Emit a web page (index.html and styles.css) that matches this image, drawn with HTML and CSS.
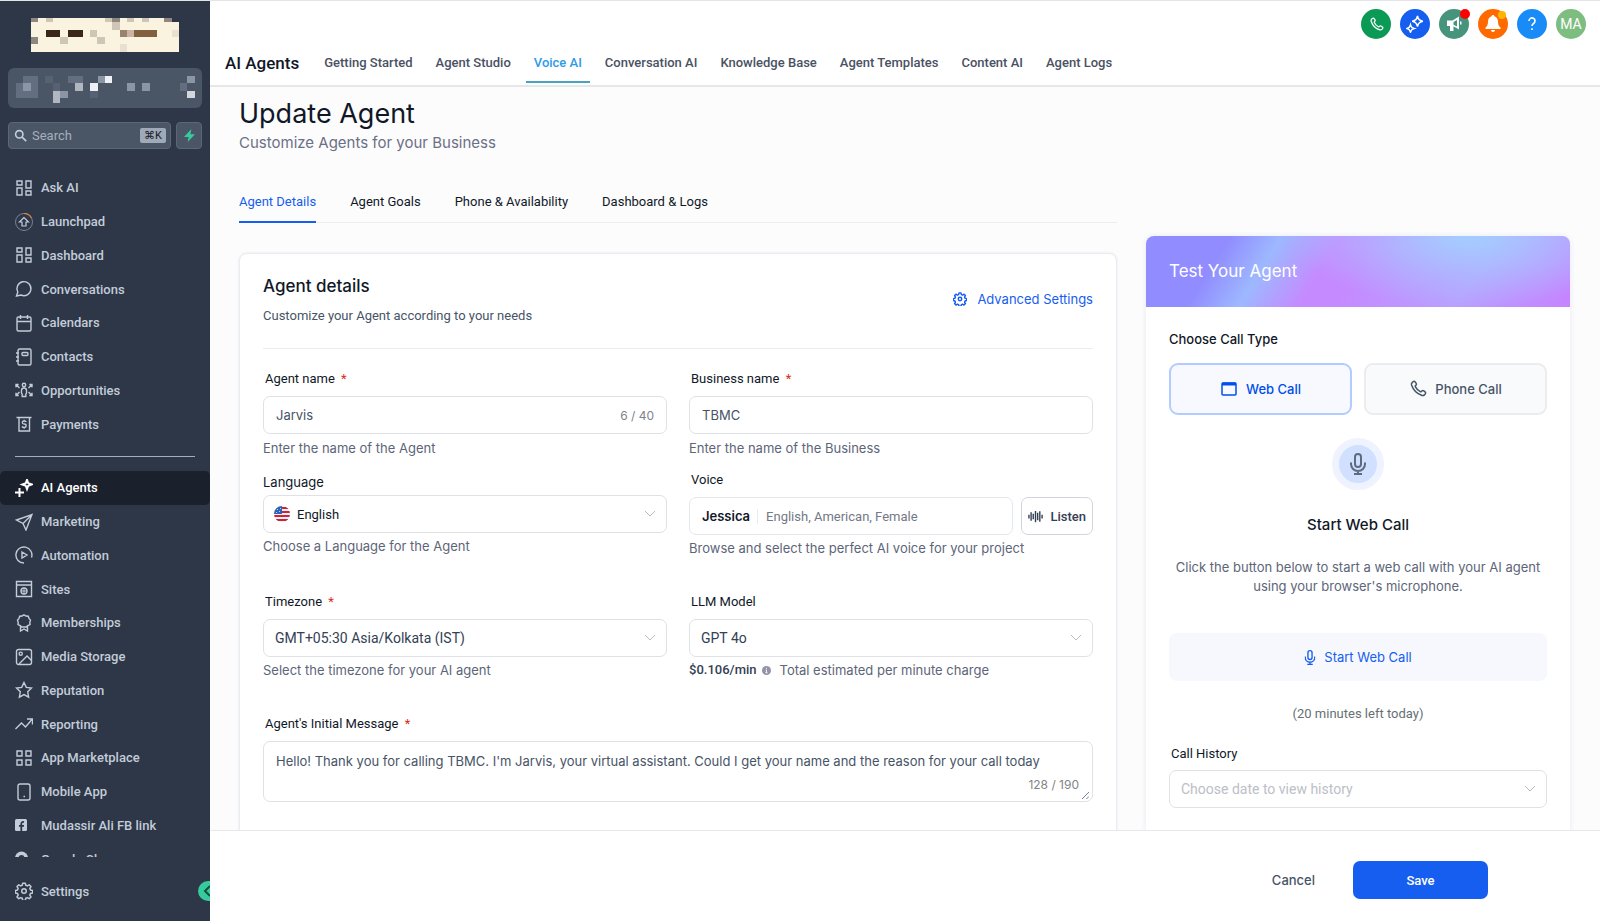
FILE: index.html
```html
<!DOCTYPE html>
<html lang="en">
<head>
  <meta charset="UTF-8">
  <meta name="viewport" content="width=device-width, initial-scale=1.0">
  <title>AI Agents - Update Agent</title>
  <link rel="stylesheet" href="styles.css">
</head>
<body>
  <div class="app">

    <aside class="sidebar">
      <svg class="logo" viewBox="90 55 450 103" shape-rendering="crispEdges" aria-hidden="true">
        <path fill="#faf3e0" d="M90 55h427v12h23v91H90z"/>
        <path fill="#8e8880" d="M90 55h22v12H90zM337 55h23v12h-23zM495 55h22v12h-22zM90 112h22v23H90z"/>
        <path fill="#cfc6b8" d="M135 55h22v12h-22zM315 55h22v12h-22zM382 55h22v12h-22zM427 55h22v12h-22zM337 67h23v23h-23zM270 90h22v22h-22zM180 112h22v23h-22zM292 112h23v23h-23z"/>
        <path fill="#3a2718" d="M135 90h45v22h-45zM203 90h44v22h-44z"/>
        <path fill="#9a8270" d="M360 90h22v22h-22z"/>
        <path fill="#cbb5a2" d="M382 90h22v22h-22z"/>
        <path fill="#80603f" d="M404 90h68v22h-68z"/>
        <path fill="#e8e1d1" d="M517 90h23v22h-23zM360 135h22v22h-22z"/>
      </svg>

      <button class="account" aria-label="Switch account">
        <svg viewBox="22 202 585 120" shape-rendering="crispEdges" aria-hidden="true">
          <path fill="#636f80" d="M67 225h45v67H45v-45h22zM202 225h45v22h-45zM540 247h22v23h-22z"/>
          <path fill="#566173" d="M135 225h22v22h-22zM157 247h23v23h-23zM270 270h22v22h-22z"/>
          <path fill="#8b95a3" d="M67 247h23v23H67zM180 270h22v22h-22zM292 225h23v22h-23zM382 247h22v23h-22zM427 247h22v23h-22zM562 225h23v22h-23z"/>
          <path fill="#b0b7c1" d="M157 270h23v37h-23zM225 247h22v23h-22z"/>
          <path fill="#d3d7dd" d="M562 270h23v22h-23z"/>
          <path fill="#eef1f5" d="M270 247h22v23h-22zM315 225h22v22h-22z"/>
        </svg>
      </button>

      <div class="search-row">
        <label class="search">
          <svg class="search-icon" viewBox="0 0 16 16" stroke-width="2"><circle cx="6.500" cy="6.500" r="4.500"/><path d="M10 10l5 5"/></svg>
          <input type="text" placeholder="Search" aria-label="Search">
          <kbd>⌘K</kbd>
        </label>
        <button class="bolt" aria-label="Quick actions">
          <svg viewBox="0 0 12 14"><path d="M8 0L0 8.500h5L4 14l8-8.500H7z"/></svg>
        </button>
      </div>

      <nav class="menu">
        <div class="menu-group first">
          <a href="#"><svg viewBox="0 0 18 18"><path d="M2 2h5v4H2zM11 2h5v7h-5zM2 9h5v7H2zM11 12h5v4h-5z"/></svg>Ask AI</a>
          <a href="#"><svg viewBox="0 0 18 18"><circle cx="9" cy="9" r="8.500" stroke-width="1" opacity=".5"/><path d="M9 .5a8.500 8.500 0 0 1 7.500 4.500" stroke="#d9843b" stroke-width="1.200"/><path d="M9 4.500L4.500 9H7v4h4V9h2.500z" stroke-width="1.200"/></svg>Launchpad</a>
          <a href="#"><svg viewBox="0 0 18 18"><path d="M2 2h5v4H2zM11 2h5v7h-5zM2 9h5v7H2zM11 12h5v4h-5z"/></svg>Dashboard</a>
          <a href="#"><svg viewBox="0 0 18 18"><path d="M1.500 16l1.300-4A7 7 0 1 1 6 15z"/></svg>Conversations</a>
          <a href="#"><svg viewBox="0 0 18 18"><rect x="2" y="3" width="14" height="14" rx="1.500"/><path d="M2 7.500h14M5.500 1v4M12.500 1v4"/></svg>Calendars</a>
          <a href="#"><svg viewBox="0 0 18 18"><rect x="3" y="1" width="13" height="16" rx="1.500"/><rect x="7" y="4.500" width="6" height="3" rx="1"/><path d="M1 5h3M1 9h3M1 13h3"/></svg>Contacts</a>
          <a href="#"><svg viewBox="0 0 18 18"><circle cx="9" cy="4" r="1.700"/><path d="M7.200 15.500v-2.300L6.500 12V9.500a2.500 2.500 0 0 1 5 0V12l-.7 1.200v2.300z"/><path d="M4.500 7L1 3.500M1 6.200V3.500h2.700M13.500 7L17 3.500M17 6.200V3.500h-2.700M4.500 11L1 14.500M1 11.800v2.700h2.700M13.500 11l3.500 3.500M17 11.800v2.700h-2.700"/></svg>Opportunities</a>
          <a href="#"><svg viewBox="0 0 18 18"><path d="M1.500 2.500h15M4 2.500v13.500h10.500V2.500"/><path d="M11.300 6.800c-.5-.7-1.200-.8-2.100-.8-2.600 0-2.600 3 0 3s2.600 3.500 0 3.500c-1 0-1.800-.3-2.300-1M9.200 4.800V6M9.200 12.500v1.200" stroke-width="1.300"/></svg>Payments</a>
        </div>
        <hr>
        <div class="menu-group second">
          <a href="#" class="active"><svg viewBox="0 0 18 18"><path d="M12 .8l1.200 3.300 3.500 1.300-3.500 1.300L12 10l-1.200-3.300-3.500-1.300 3.500-1.300zM4.500 9v9M0 13.500h9"/></svg>AI Agents</a>
          <a href="#"><svg viewBox="0 0 18 18"><path d="M1.500 7L17 1.500 11 17 8 10.500zM8 10.500L17 1.500"/></svg>Marketing</a>
          <a href="#"><svg viewBox="0 0 18 18"><path d="M16.500 11.500A8 8 0 1 0 9 17M7 6l5 3-5 3z"/></svg>Automation</a>
          <a href="#"><svg viewBox="0 0 18 18"><path d="M1.500 1.500h15v15h-15zM1.500 5h15"/><circle cx="9" cy="11" r="3"/><path d="M6 11h6M9 8v6" stroke-width="1"/></svg>Sites</a>
          <a href="#"><svg viewBox="0 0 18 18"><path d="M9 .8l2 1.200 2.300.2.700 2.200 1.500 1.700-.7 2.200.2 2.300-2.200.9L11 13H7l-1.800-1.500-2.200-.9.200-2.300-.7-2.200L4 4.400l.7-2.200L7 2zM5.500 11.500V17L9 15l3.500 2v-5.500"/></svg>Memberships</a>
          <a href="#"><svg viewBox="0 0 18 18"><rect x="1.500" y="1.500" width="15" height="15" rx="2"/><circle cx="5.700" cy="5.700" r="1.600"/><path d="M4 16l8-8 4.500 4.500"/></svg>Media Storage</a>
          <a href="#"><svg viewBox="0 0 18 18"><path d="M9 1.500l2.300 4.900 5.200.7-3.800 3.700.9 5.400L9 13.600l-4.600 2.600.9-5.400L1.500 7.100l5.200-.7z"/></svg>Reputation</a>
          <a href="#"><svg viewBox="0 0 18 18"><path d="M.5 14l6-6 4 4L17 4.500M12 4h5.500v5.500"/></svg>Reporting</a>
          <a href="#"><svg viewBox="0 0 18 18"><path d="M2 2h5v5H2zM11 2h5v5h-5zM2 11h5v5H2zM11 11h5v5h-5z"/></svg>App Marketplace</a>
          <a href="#"><svg viewBox="0 0 18 18"><rect x="3" y="1" width="12" height="16" rx="2"/><path d="M8.500 13.500h1.500"/></svg>Mobile App</a>
          <a href="#"><svg class="solid" viewBox="0 0 18 18"><rect y="3" width="12" height="12" rx="1.500"/><path d="M6.300 15v-7c0-1.500.6-2.300 2.700-2.100M4 9.800h5" fill="none" stroke="#2d3748" stroke-width="1.800"/></svg>Mudassir Ali FB link</a>
          <a href="#"><svg class="solid" viewBox="0 0 18 18"><circle cx="6.500" cy="8" r="6.500"/><circle cx="6.500" cy="8" r="3" fill="#2d3748"/></svg>Google Chrome</a>
        </div>
      </nav>

      <div class="settings">
        <a href="#"><svg viewBox="0 0 24 24"><use href="#gear"/></svg>Settings</a>
        <button class="collapse" aria-label="Collapse sidebar"><svg viewBox="0 0 12 12"><path d="M9 1L4 6l5 5"/></svg></button>
      </div>
    </aside>

    <div class="main">
      <header class="topbar">
        <div class="actions">
          <button class="circle green" aria-label="Call"><svg viewBox="0 0 24 24"><use href="#phone"/></svg></button>
          <button class="circle blue" aria-label="Ask AI"><svg viewBox="0 0 18 18"><path d="M11.500 1c.9 3.500 1.800 4.400 5.300 5.300-3.500.9-4.400 1.800-5.300 5.300-.9-3.500-1.800-4.400-5.300-5.300 3.500-.9 4.400-1.800 5.300-5.300zM4.500 10c.6 2.300 1.200 2.900 3.500 3.500-2.300.6-2.900 1.200-3.500 3.500-.6-2.300-1.200-2.900-3.500-3.500 2.300-.6 2.900-1.200 3.500-3.500z"/></svg></button>
          <button class="circle teal" aria-label="Announcements"><svg class="solid" viewBox="0 0 18 18"><path d="M2 5.500h5.500L14 1.500v13l-5.500-3.300V16H5v-5H2z"/><path d="M8.500 7l3.500-2v6.500L8.500 9.700z" fill="#45947b"/><path d="M15 6.500h1.500v3H15z"/></svg><span class="dot red"></span></button>
          <button class="circle orange" aria-label="Notifications"><svg class="solid" viewBox="0 0 18 18"><path d="M9 0c-.8 0-1.300.5-1.300 1.300C5.200 2 4 4 4 6.500c0 3.200-.8 4.500-2.500 6V14h15v-1.500c-1.700-1.500-2.500-2.800-2.500-6C14 4 12.800 2 10.300 1.300 10.300.5 9.800 0 9 0zM7 15h4c0 2.600-4 2.600-4 0z"/></svg><span class="dot yellow"></span></button>
          <button class="circle sky" aria-label="Help"><svg viewBox="0 0 18 18"><path d="M6 6a3 3 0 1 1 4.600 2.500C9.500 9.200 9 9.700 9 11M9 13.300v1.700" stroke-width="1.600"/></svg></button>
          <button class="circle avatar">MA</button>
        </div>
        <nav class="tabs">
          <h2>AI Agents</h2>
          <a href="#">Getting Started</a>
          <a href="#">Agent Studio</a>
          <a href="#" class="active">Voice AI</a>
          <a href="#">Conversation AI</a>
          <a href="#">Knowledge Base</a>
          <a href="#">Agent Templates</a>
          <a href="#">Content AI</a>
          <a href="#">Agent Logs</a>
        </nav>
      </header>

      <main class="content">
        <section class="left">
          <h1>Update Agent</h1>
          <p class="subtitle">Customize Agents for your Business</p>

          <nav class="subtabs">
            <a href="#" class="active">Agent Details</a>
            <a href="#">Agent Goals</a>
            <a href="#">Phone &amp; Availability</a>
            <a href="#">Dashboard &amp; Logs</a>
          </nav>

          <form class="card">
            <div class="card-head">
              <div>
                <h3>Agent details</h3>
                <p>Customize your Agent according to your needs</p>
              </div>
              <button type="button" class="advanced"><svg viewBox="0 0 24 24"><use href="#gear"/></svg>Advanced Settings</button>
            </div>

            <div class="fields">
              <div class="field">
                <label for="agent-name">Agent name <span class="req">*</span></label>
                <div class="box">
                  <input id="agent-name" type="text" value="Jarvis">
                  <span class="count">6 / 40</span>
                </div>
                <p class="help">Enter the name of the Agent</p>
              </div>
              <div class="field">
                <label for="business-name">Business name <span class="req">*</span></label>
                <div class="box">
                  <input id="business-name" type="text" value="TBMC">
                </div>
                <p class="help">Enter the name of the Business</p>
              </div>

              <div class="field language">
                <label for="language">Language</label>
                <div class="select-wrap">
                  <svg class="flag" viewBox="0 0 16 16">
                    <clipPath id="round"><circle cx="8" cy="8" r="8"/></clipPath>
                    <g clip-path="url(#round)">
                      <path fill="#f4f4f6" d="M0 0h16v16H0z"/>
                      <path fill="#d0203a" d="M7 1h9v2H7zM7 5h9v2H7zM0 9h16v2H0zM0 13h16v2H0z"/>
                      <path fill="#2f62b5" d="M0 0h8v8H0z"/>
                      <path fill="#c8d8f2" d="M3 3h1v1H3zM6 2h1v1H6zM5 5h1v1H5zM2 6h1v1H2z"/>
                    </g>
                  </svg>
                  <select id="language"><option>English</option></select>
                  <svg class="chevron" viewBox="0 0 12 8"><path d="M1 1l5 5 5-5"/></svg>
                </div>
                <p class="help">Choose a Language for the Agent</p>
              </div>
              <div class="field voice">
                <label for="voice">Voice</label>
                <div class="voice-row">
                  <button type="button" class="voice-box" id="voice"><strong>Jessica</strong><span>English, American, Female</span></button>
                  <button type="button" class="listen"><svg viewBox="0 0 16 16"><path d="M1 6v4M3.300 3.500v9M5.600 5v6M8 2v12M10.300 4v8M12.600 2.500v11M15 6v4"/></svg>Listen</button>
                </div>
                <p class="help">Browse and select the perfect AI voice for your project</p>
              </div>

              <div class="field">
                <label for="timezone">Timezone <span class="req">*</span></label>
                <div class="select-wrap">
                  <select id="timezone"><option>GMT+05:30 Asia/Kolkata (IST)</option></select>
                  <svg class="chevron" viewBox="0 0 12 8"><path d="M1 1l5 5 5-5"/></svg>
                </div>
                <p class="help">Select the timezone for your AI agent</p>
              </div>
              <div class="field">
                <label for="model">LLM Model</label>
                <div class="select-wrap">
                  <select id="model"><option>GPT 4o</option></select>
                  <svg class="chevron" viewBox="0 0 12 8"><path d="M1 1l5 5 5-5"/></svg>
                </div>
                <p class="help price"><strong>$0.106/min</strong><svg class="solid" viewBox="0 0 10 10"><circle cx="5" cy="5" r="5"/><path d="M5 2v1.200M4 4.500h1v3M3.800 7.500h2.400" fill="none" stroke="#fff"/></svg>Total estimated per minute charge</p>
              </div>

              <div class="field wide">
                <label for="message">Agent's Initial Message <span class="req">*</span></label>
                <div class="box message">
                  <textarea id="message" rows="1" wrap="off">Hello! Thank you for calling TBMC. I'm Jarvis, your virtual assistant. Could I get your name and the reason for your call today</textarea>
                  <span class="count">128 / 190</span>
                  <svg class="grip" viewBox="0 0 8 8"><path d="M0 8l8-8M5 8l3-3"/></svg>
                </div>
              </div>
            </div>
          </form>
        </section>

        <aside class="test">
          <h3 class="test-head">Test Your Agent</h3>
          <div class="test-body">
            <h4>Choose Call Type</h4>
            <div class="call-types">
              <button class="call-type selected"><svg viewBox="0 0 16 14"><rect x="1" y="1" width="14" height="12" rx="1"/><path d="M1 2h14" stroke-width="3"/></svg>Web Call</button>
              <button class="call-type"><svg viewBox="0 0 24 24"><use href="#phone"/></svg>Phone Call</button>
            </div>
            <div class="mic"><svg viewBox="0 0 16 22"><use href="#mic"/></svg></div>
            <h5>Start Web Call</h5>
            <p class="info">Click the button below to start a web call with your AI agent using your browser's microphone.</p>
            <button class="start"><svg viewBox="0 0 16 22"><use href="#mic"/></svg>Start Web Call</button>
            <p class="left-today">(20 minutes left today)</p>
            <label for="history">Call History</label>
            <div class="select-wrap history">
              <select id="history"><option>Choose date to view history</option></select>
              <svg class="chevron" viewBox="0 0 12 8"><path d="M1 1l5 5 5-5"/></svg>
            </div>
          </div>
        </aside>
      </main>

      <footer class="footer">
        <button class="cancel">Cancel</button>
        <button class="save">Save</button>
      </footer>
    </div>
  </div>

  <!-- shared icons -->
  <svg class="defs" aria-hidden="true">
    <symbol id="gear" viewBox="0 0 24 24">
      <circle cx="12" cy="12" r="3"/>
      <path d="M10.300 1.500h3.400l.7 2.900 2 .8 2.500-1.500 2.400 2.400-1.500 2.500.8 2 2.900.7v3.400l-2.900.7-.8 2 1.500 2.500-2.400 2.400-2.500-1.500-2 .8-.7 2.900h-3.400l-.7-2.900-2-.8-2.500 1.500-2.400-2.400 1.500-2.500-.8-2-2.900-.7v-3.400l2.900-.7.8-2-1.500-2.500 2.400-2.400 2.500 1.500 2-.8z" stroke-linejoin="round"/>
    </symbol>
    <symbol id="phone" viewBox="0 0 24 24">
      <path d="M8.400 8.900a14.500 14.500 0 0 0 6.700 6.700c.5.200 1 .1 1.400-.3l.6-.6c.8-.8 1.800-.8 2.700-.1l1.600 1.200c1 .8 1 2 .2 2.900l-1.100 1.100c-.8.8-1.900 1.200-3.200.8A22 22 0 0 1 3.400 6.700C3 5.400 3.400 4.300 4.200 3.500l1.100-1.100c.9-.8 2.100-.8 2.900.2l1.200 1.600c.7.900.7 1.900-.1 2.700l-.6.6c-.4.4-.5.900-.3 1.400z"/>
    </symbol>
    <symbol id="mic" viewBox="0 0 16 22">
      <rect x="5" y="1" width="6" height="13" rx="3"/>
      <path d="M1 9.500v1.500a7 7 0 0 0 14 0V9.500M8 18v3M4 21h8"/>
    </symbol>
  </svg>
</body>
</html>
```
FILE: styles.css
```css
* {
  margin: 0;
  padding: 0;
  box-sizing: border-box;
}

body {
  font-family: Inter, sans-serif;
  font-size: 13px;
  color: #101828;
}

button,
input,
select,
textarea {
  font: inherit;
  color: inherit;
  border: none;
  background: none;
  outline: none;
}

button,
select {
  cursor: pointer;
}

a {
  text-decoration: none;
  color: inherit;
}

svg {
  fill: none;
  stroke: currentColor;
  flex-shrink: 0;
}

svg.solid {
  fill: currentColor;
  stroke: none;
}

.defs {
  display: none;
}

.app {
  display: flex;
  height: 100vh;
  border-top: 1px solid #e2e4e8;
}

/* Sidebar */
.sidebar {
  width: 210px;
  flex-shrink: 0;
  display: flex;
  flex-direction: column;
  background: #2d3748;
  color: #c3ccd8;
  font-family: Roboto, sans-serif;
  overflow: hidden;
}

.logo {
  width: 150px;
  height: 34px;
  margin: 17px 0 16px 30px;
  stroke: none;
}

.account {
  height: 40px;
  margin: 0 8px 14px;
  border-radius: 6px;
  background: #4a5566;
  overflow: hidden;
}

.account svg {
  display: block;
  width: 100%;
  height: 40px;
  stroke: none;
}

.search-row {
  display: flex;
  gap: 5px;
  margin: 0 8px;
}

.search,
.bolt {
  height: 27px;
  border: 1px solid #5b6778;
  border-radius: 4px;
  background: #4a5566;
}

.search {
  flex: 1;
  min-width: 0;
  display: flex;
  align-items: center;
  gap: 5px;
  padding: 0 4px 0 5px;
}

.search-icon {
  width: 13px;
  height: 13px;
}

.search input {
  flex: 1;
  width: 0;
  min-width: 0;
}

.search input::placeholder {
  color: #a6afbc;
}

kbd {
  padding: 0 4px;
  border-radius: 2px;
  background: #a0a9b8;
  color: #1a202c;
  font: 11px/15px Roboto, "DejaVu Sans", sans-serif;
}

.bolt {
  flex-shrink: 0;
  display: flex;
  align-items: center;
  justify-content: center;
  width: 26px;
}

.bolt svg {
  width: 11px;
  height: 13px;
  fill: #37ca9e;
  stroke: none;
}

.menu {
  flex: 1;
  min-height: 0;
  margin-top: 22px;
  overflow: hidden;
}

.menu-group {
  display: grid;
  grid-auto-rows: 1fr;
}

.menu-group.first {
  min-height: 270px;
}

.menu-group.second {
  min-height: 405px;
}

.menu a,
.settings a {
  display: flex;
  align-items: center;
  gap: 8px;
  padding: 0 15px;
  font-weight: 500;
}

.menu svg,
.settings a svg {
  width: 18px;
  height: 18px;
  stroke-width: 1.400;
}

.menu a.active {
  background: #1a202c;
  border-radius: 5px;
  color: #fff;
}

.menu a.active svg {
  stroke-width: 2;
}

.menu hr {
  margin: 15px 15px 14px;
  border: none;
  border-top: 1px solid #a0aec0;
}

.settings {
  display: flex;
  align-items: center;
  justify-content: space-between;
  height: 64px;
  padding-top: 4px;
}

.settings a svg {
  stroke-width: 2;
}

.collapse {
  width: 12px;
  height: 20px;
  border-radius: 10px 0 0 10px;
  background: #37ca9e;
  color: #14523f;
  overflow: hidden;
}

.collapse svg {
  display: block;
  width: 12px;
  height: 12px;
  margin-left: 3px;
  stroke-width: 2;
}

/* Header */
.main {
  flex: 1;
  min-width: 0;
  display: flex;
  flex-direction: column;
}

.topbar {
  border-bottom: 2px solid #e6e7e9;
  background: #fff;
  font-family: Roboto, sans-serif;
}

.actions {
  display: flex;
  justify-content: flex-end;
  gap: 9px;
  padding: 8px 14px 0;
}

.circle {
  position: relative;
  display: flex;
  align-items: center;
  justify-content: center;
  width: 30px;
  height: 30px;
  border-radius: 50%;
  color: #fff;
}

.circle svg {
  width: 18px;
  height: 18px;
  stroke-width: 1.500;
}

.circle.green svg {
  width: 15px;
  height: 15px;
  stroke-width: 2;
}

.green { background: #0a9a55; }
.blue { background: #155eef; }
.teal { background: #45947b; }
.orange { background: #ff6a00; }
.sky { background: #188bf6; }

.avatar {
  background: #7dbd80;
  font-size: 14px;
}

.dot {
  position: absolute;
  top: 0;
  right: -1px;
  width: 10px;
  height: 10px;
  border-radius: 50%;
}

.dot.red { background: #f00; }
.dot.yellow { background: #ffb400; width: 8px; height: 8px; top: 2px; right: 2px; }

.tabs {
  display: flex;
  align-items: flex-end;
  gap: 7px;
  padding: 2px 15px;
}

.tabs h2 {
  margin-right: 10px;
  font-size: 17px;
  font-weight: 500;
  line-height: 44px;
  margin-bottom: -2px;
}

.tabs a {
  padding: 0 8px;
  line-height: 37px;
  font-weight: 500;
  color: #4a5163;
  border-bottom: 2px solid transparent;
}

.tabs a.active {
  color: #2e9be6;
  border-color: #4aa3bf;
}

/* Content */
.content {
  flex: 1;
  min-height: 0;
  display: grid;
  grid-template-columns: minmax(0, 1fr) 424px;
  gap: 29px;
  padding: 0 30px 0 29px;
  background: #fcfcfd;
  overflow: hidden;
}

h1 {
  margin-top: 8px;
  font-size: 27px;
  font-weight: 400;
  line-height: 38px;
}

.subtitle {
  font-size: 15px;
  line-height: 20px;
  color: #6b7085;
}

.subtabs {
  display: flex;
  gap: 34px;
  margin-top: 30px;
  border-bottom: 1px solid #eceef1;
  font-family: Roboto, sans-serif;
}

.subtabs a {
  margin-bottom: -1px;
  line-height: 38px;
  border-bottom: 2px solid transparent;
}

.subtabs a.active {
  color: #155eef;
  border-color: #155eef;
}

.card {
  margin-top: 30px;
  min-height: 620px;
  padding: 20px 23px;
  border: 1px solid #eaecf0;
  border-radius: 8px;
  background: #fff;
  box-shadow: 0 0 3px #e6e8ec;
}

.card-head {
  display: flex;
  justify-content: space-between;
  align-items: flex-start;
  padding-bottom: 21px;
  border-bottom: 1px solid #eaecf0;
}

.card-head h3 {
  font-size: 17px;
  font-weight: 500;
  line-height: 24px;
}

.card-head p {
  margin-top: 7px;
  font-family: Roboto, sans-serif;
  line-height: 22px;
  color: #475467;
}

.advanced {
  display: flex;
  align-items: center;
  gap: 10px;
  margin-top: 15px;
  line-height: 20px;
  color: #155eef;
}

.advanced svg {
  width: 14px;
  height: 14px;
  stroke-width: 2.500;
}

.fields {
  display: grid;
  grid-template-columns: 1fr 1fr;
  column-gap: 22px;
  margin-top: 20px;
}

.field {
  display: flex;
  flex-direction: column;
  min-height: 101px;
}

.field.wide {
  grid-column: 1 / -1;
}

.field.language,
.field.voice,
.field:nth-child(n + 5) {
  min-height: 122px;
}

.field label,
.test-body label {
  padding-left: 2px;
  margin-bottom: 7px;
  font-family: Roboto, sans-serif;
  line-height: 20px;
}

.field.language label {
  padding: 2px 0 0;
  margin-bottom: 3px;
  font-family: Inter, sans-serif;
}

.req {
  margin-left: 3px;
  color: #d92d20;
}

.box,
.select-wrap {
  position: relative;
  display: flex;
  align-items: center;
  height: 38px;
  border: 1px solid #dfe1e6;
  border-radius: 7px;
  background: #fff;
}

.box {
  padding: 0 12px;
}

.box input {
  flex: 1;
  min-width: 0;
  color: #475467;
}

.count {
  font-size: 12px;
  color: #808489;
}

.help {
  margin-top: 4px;
  line-height: 20px;
  color: #5d6579;
}

.select-wrap + .help,
.voice-row + .help {
  margin-top: 3px;
}

.select-wrap select {
  appearance: none;
  width: 100%;
  height: 36px;
  padding: 0 30px 0 11px;
  font-family: Roboto, sans-serif;
  font-size: 14px;
  color: #344054;
}

.language .select-wrap select {
  padding-left: 33px;
  font-size: 13px;
  color: #101828;
}

.chevron {
  position: absolute;
  right: 10px;
  width: 12px;
  height: 8px;
  color: #b7bcc5;
  pointer-events: none;
}

.flag {
  position: absolute;
  left: 10px;
  width: 16px;
  height: 16px;
  stroke: none;
}

.voice-row {
  display: flex;
  gap: 8px;
}

.voice-box,
.listen {
  display: flex;
  align-items: center;
  height: 38px;
  border: 1px solid #e4e7ec;
  border-radius: 7px;
  background: #fff;
}

.voice-box {
  flex: 1;
  padding: 0 12px;
}

.voice-box strong {
  font-weight: 600;
}

.voice-box span {
  margin-left: 7px;
  padding-left: 8px;
  border-left: 1px solid #eaecf0;
  font-family: Roboto, sans-serif;
  color: #737988;
}

.listen {
  gap: 7px;
  padding: 0 6px;
  border-color: #d0d5dd;
  font-family: Roboto, sans-serif;
  font-weight: 500;
  color: #344054;
}

.listen svg {
  width: 15px;
  height: 15px;
  stroke-width: 1.500;
}

.price {
  display: flex;
  align-items: center;
}

.price strong {
  font-family: Roboto, sans-serif;
  font-weight: 500;
  color: #344054;
}

.price svg {
  width: 9px;
  height: 9px;
  margin: 0 9px 0 5px;
  color: #9293ab;
}

.box.message {
  height: 61px;
  padding: 9px 27px 0 12px;
  align-items: flex-start;
}

.message textarea {
  width: 100%;
  height: 22px;
  line-height: 20px;
  resize: none;
  overflow: hidden;
  color: #475467;
}

.message .count {
  position: absolute;
  right: 13px;
  bottom: 9px;
}

.grip {
  position: absolute;
  right: 3px;
  bottom: 2px;
  width: 7px;
  height: 7px;
  color: #667085;
}

/* Test panel */
.test {
  margin-top: 149px;
  min-height: 640px;
  border-radius: 8px;
  background: #fff;
  box-shadow: 0 0 6px #e8eaee;
  overflow: hidden;
}

.test-head {
  padding: 0 23px;
  font-size: 17px;
  font-weight: 400;
  line-height: 71px;
  color: #fff;
  background:
    radial-gradient(ellipse 42% 100% at 76% 0, #a4ceff, transparent),
    linear-gradient(122deg, #918cff 18%, #9db8ff 29%, #c58aff 42%, #c58aff 50%, #b8a0ff 75%, #c585ff 98%);
}

.test-body {
  display: flex;
  flex-direction: column;
  padding: 22px 23px;
}

.test-body h4 {
  font-size: 13px;
  font-weight: 500;
  line-height: 20px;
}

.call-types {
  display: grid;
  grid-template-columns: 1fr 1fr;
  gap: 12px;
  margin-top: 14px;
}

.call-type,
.start {
  display: flex;
  align-items: center;
  justify-content: center;
  gap: 8px;
}

.call-type {
  height: 52px;
  border: 2px solid #eaecf0;
  border-radius: 9px;
  background: #f9fafb;
  color: #475467;
  font-weight: 500;
}

.call-type svg {
  width: 18px;
  height: 18px;
  stroke-width: 2;
}

.call-type.selected {
  border-color: #b2ccff;
  background: #f7f9ff;
  color: #004eeb;
}

.call-type.selected svg {
  height: 14px;
  stroke-width: 1.500;
}

.mic {
  align-self: center;
  display: flex;
  align-items: center;
  justify-content: center;
  width: 52px;
  height: 52px;
  margin-top: 23px;
  border: 7px solid #eff3ff;
  border-radius: 50%;
  background: #d1e0ff;
  color: #5d6b80;
}

.mic svg {
  width: 16px;
  height: 22px;
  stroke-width: 2;
}

h5 {
  margin-top: 23px;
  font-size: 15px;
  font-weight: 500;
  line-height: 24px;
  text-align: center;
}

.info {
  margin-top: 21px;
  line-height: 19px;
  text-align: center;
  color: #5d6579;
}

.start {
  height: 48px;
  margin-top: 37px;
  border-radius: 8px;
  background: #f6f8fd;
  color: #155eef;
}

.start svg {
  width: 12px;
  height: 15px;
  stroke-width: 2;
}

.left-today {
  margin-top: 23px;
  font-family: Roboto, sans-serif;
  line-height: 20px;
  text-align: center;
  color: #667074;
}

.test-body label {
  margin-top: 20px;
  margin-bottom: 6px;
}

.select-wrap.history select {
  color: #bcc0c6;
}

/* Footer */
.footer {
  display: flex;
  align-items: center;
  justify-content: flex-end;
  gap: 38px;
  height: 91px;
  padding: 8px 112px 0 0;
  border-top: 1px solid #e6e8ec;
  background: #fff;
}

.cancel {
  font-weight: 500;
  color: #475467;
}

.save {
  width: 135px;
  height: 38px;
  border-radius: 7px;
  background: #155eef;
  color: #fff;
  font-family: Roboto, sans-serif;
  font-weight: 500;
}
```
